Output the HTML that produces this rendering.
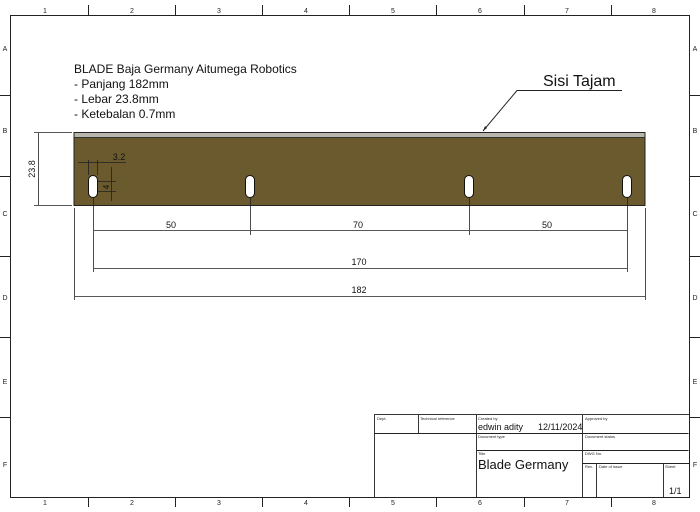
<!DOCTYPE html>
<html><head><style>body{margin:0;background:#fff}svg{display:block;font-family:"Liberation Sans",sans-serif}</style></head><body>
<svg width="700" height="512" viewBox="0 0 700 512" xmlns="http://www.w3.org/2000/svg">
<rect width="700" height="512" fill="#fff"/>
<g stroke="#222" stroke-width="1" fill="none">
<rect x="10.5" y="15.5" width="679" height="482"/>
<path d="M88.5 5v10M175.5 5v10M262.5 5v10M349.5 5v10M436.5 5v10M524.5 5v10M611.5 5v10"/>
<path d="M88.5 497v10M175.5 497v10M262.5 497v10M349.5 497v10M436.5 497v10M524.5 497v10M611.5 497v10"/>
<path d="M0 95.5h10M0 176.5h10M0 256.5h10M0 337.5h10M0 417.5h10"/>
<path d="M689 95.5h11M689 176.5h11M689 256.5h11M689 337.5h11M689 417.5h11"/>
</g>
<g font-size="7" fill="#222" text-anchor="middle">
<text x="45" y="13">1</text><text x="132" y="13">2</text><text x="219" y="13">3</text><text x="306" y="13">4</text><text x="393" y="13">5</text><text x="480" y="13">6</text><text x="567" y="13">7</text><text x="654" y="13">8</text>
<text x="45" y="505">1</text><text x="132" y="505">2</text><text x="219" y="505">3</text><text x="306" y="505">4</text><text x="393" y="505">5</text><text x="480" y="505">6</text><text x="567" y="505">7</text><text x="654" y="505">8</text>
<text x="5" y="51">A</text><text x="5" y="133">B</text><text x="5" y="216">C</text><text x="5" y="300">D</text><text x="5" y="384">E</text><text x="5" y="467">F</text>
<text x="695" y="51">A</text><text x="695" y="133">B</text><text x="695" y="216">C</text><text x="695" y="300">D</text><text x="695" y="384">E</text><text x="695" y="467">F</text>
</g>
<g font-size="12" fill="#111">
<text x="74" y="73">BLADE Baja Germany Aitumega Robotics</text>
<text x="74" y="88">- Panjang 182mm</text>
<text x="74" y="103">- Lebar 23.8mm</text>
<text x="74" y="118">- Ketebalan 0.7mm</text>
</g>
<text x="543" y="86" font-size="16" fill="#111">Sisi Tajam</text>
<path d="M622 90.5H517L483 131" stroke="#222" fill="none"/>
<path d="M483 131l2-5 2 2z" fill="#222"/>
<rect x="74" y="132.5" width="571" height="73" fill="#6b5a2d" stroke="#222"/>
<rect x="74.5" y="133" width="570" height="4" fill="#b9b6ad"/>
<line x1="74" y1="137.5" x2="645" y2="137.5" stroke="#333"/>
<g fill="#fff" stroke="#111">
<rect x="88.5" y="175.5" width="9" height="22" rx="4.5"/>
<rect x="245.5" y="175.5" width="9" height="22" rx="4.5"/>
<rect x="464.5" y="175.5" width="9" height="22" rx="4.5"/>
<rect x="622.5" y="175.5" width="9" height="22" rx="4.5"/>
</g>
<g stroke="#222" stroke-width="0.8" fill="none">
<path d="M34 132.5h38M34 205.5h38M38.5 133v72"/>
<path d="M93.5 197v75M250.5 197v38M469.5 197v38M627.5 197v75M74.5 208v92M645.5 208v92"/>
<path d="M94 230.5h156M251 230.5h218M470 230.5h157M94 268.5h533M75 296.5h570"/>
<path d="M88.5 160v15M97.5 160v15M78 162.5h48"/>
<path d="M98 181.5h18M98 191.5h18M111.5 167v34"/>
</g>
<g font-size="9" fill="#111" text-anchor="middle">
<text x="171" y="228">50</text><text x="358" y="228">70</text><text x="547" y="228">50</text>
<text x="359" y="265">170</text><text x="359" y="293">182</text>
<text x="119" y="160">3.2</text>
<text transform="translate(35 169) rotate(-90)">23.8</text>
<text transform="translate(109 187) rotate(-90)" font-size="8">4</text>
</g>
<g stroke="#222" fill="none" stroke-width="0.9">
<rect x="374.5" y="414.5" width="315" height="83"/>
<path d="M374.5 433.5h314M418.5 415v18M476.5 415v82M582.5 415v82M476.5 450.5h212M582.5 463.5h107M596.5 463v34M663.5 463v34"/>
</g>
<g font-size="4" fill="#222">
<text x="377" y="420">Dept.</text><text x="420" y="420">Technical reference</text><text x="478" y="420">Created by</text><text x="585" y="420">Approved by</text>
<text x="478" y="438">Document type</text><text x="585" y="438">Document status</text>
<text x="478" y="455">Title</text><text x="585" y="455">DWG No.</text>
<text x="585" y="468">Rev.</text><text x="599" y="468">Date of issue</text><text x="665" y="468">Sheet</text>
</g>
<text x="478" y="430" font-size="9" fill="#111">edwin adity</text>
<text x="538" y="430" font-size="9" fill="#111">12/11/2024</text>
<text x="478" y="469" font-size="13" fill="#111">Blade Germany</text>
<text x="669" y="494" font-size="9" fill="#111">1/1</text>
</svg>
</body></html>
